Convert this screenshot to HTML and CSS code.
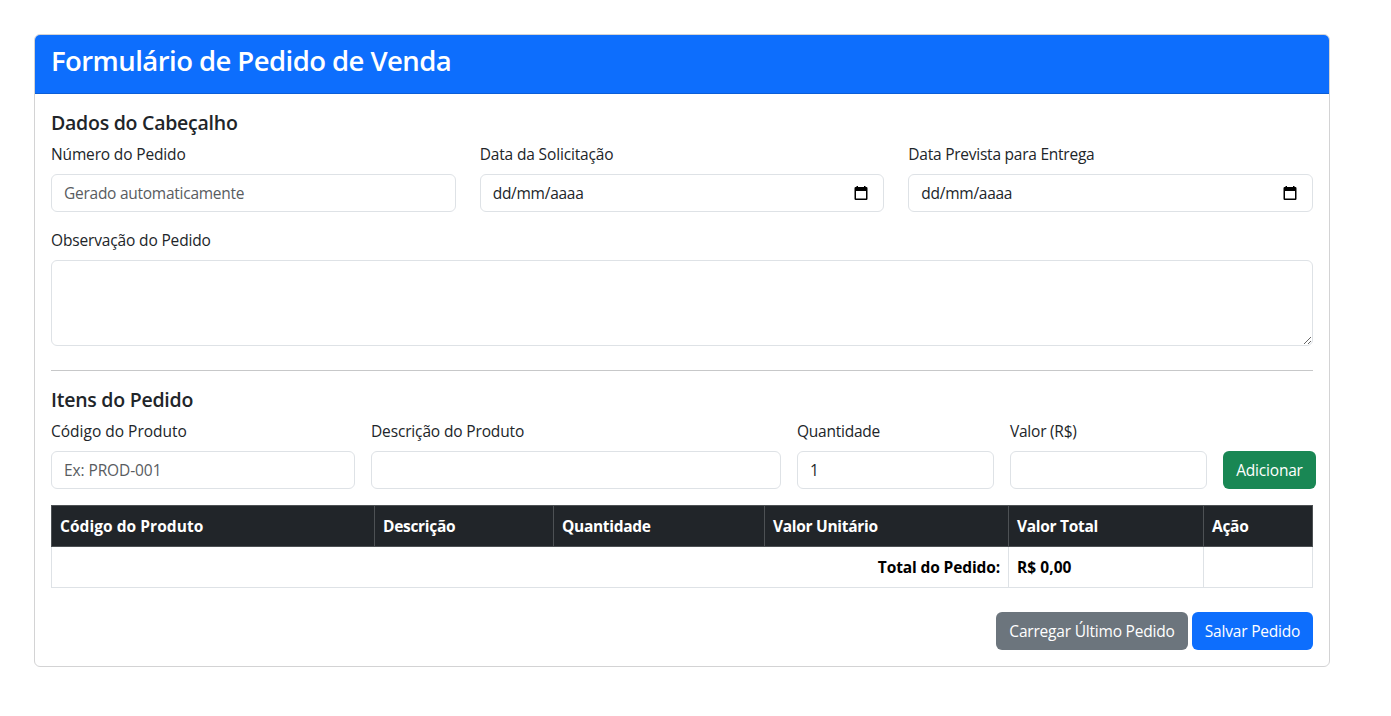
FILE: index.html
```html
<!DOCTYPE html>
<html lang="pt-BR">
<head>
<meta charset="utf-8">
<title>Formulário de Pedido de Venda</title>
<link rel="stylesheet" href="styles.css">
</head>
<body>
<main class="card">
  <header class="card-header"><h1 class="title">Formulário de Pedido de Venda</h1></header>
  <form class="card-body">
    <h2 class="section-title">Dados do Cabeçalho</h2>
    <div class="row-header">
      <div class="field">
        <label class="label" for="numero">Número do Pedido</label>
        <input class="control" id="numero" placeholder="Gerado automaticamente" readonly>
      </div>
      <div class="field">
        <span class="label">Data da Solicitação</span>
        <div class="control date"><span>dd/mm/aaaa</span>
          <svg class="calendar" viewBox="0 0 14 16"><path fill-rule="evenodd" d="M2.5 1h1.5v1h6V1h1.5v1H12.3Q13.5 2 13.5 3.200V13.800Q13.500 15 12.300 15H1.700Q.5 15 .5 13.800V3.200Q.5 2 1.700 2h.8zM2 6v7.500h10V6z"/></svg>
        </div>
      </div>
      <div class="field">
        <span class="label tight">Data Prevista para Entrega</span>
        <div class="control date"><span>dd/mm/aaaa</span>
          <svg class="calendar" viewBox="0 0 14 16"><path fill-rule="evenodd" d="M2.5 1h1.5v1h6V1h1.5v1H12.3Q13.5 2 13.5 3.200V13.800Q13.500 15 12.300 15H1.700Q.5 15 .5 13.800V3.200Q.5 2 1.700 2h.8zM2 6v7.500h10V6z"/></svg>
        </div>
      </div>
    </div>
    <div class="field notes">
      <label class="label" for="obs">Observação do Pedido</label>
      <textarea class="control area" id="obs"></textarea>
    </div>
    <hr class="rule">
    <h2 class="section-title">Itens do Pedido</h2>
    <div class="row-item">
      <div class="field">
        <label class="label wide" for="codigo">Código do Produto</label>
        <input class="control code" id="codigo" placeholder="Ex: PROD-001">
      </div>
      <div class="field">
        <label class="label" for="descricao">Descrição do Produto</label>
        <input class="control" id="descricao">
      </div>
      <div class="field">
        <label class="label tight" for="qtd">Quantidade</label>
        <input class="control" id="qtd" value="1">
      </div>
      <div class="field">
        <label class="label tight" for="valor">Valor (R$)</label>
        <input class="control" id="valor">
      </div>
      <button class="btn success" type="button">Adicionar</button>
    </div>
    <table class="items">
      <colgroup><col class="c1"><col class="c2"><col class="c3"><col class="c4"><col class="c5"><col class="c6"></colgroup>
      <thead><tr><th class="wide">Código do Produto</th><th>Descrição</th><th>Quantidade</th><th>Valor Unitário</th><th>Valor Total</th><th>Ação</th></tr></thead>
      <tfoot><tr><td class="total-label" colspan="4">Total do Pedido:</td><td class="wide">R$ 0,00</td><td></td></tr></tfoot>
    </table>
    <div class="actions">
      <button class="btn secondary" type="button">Carregar Último Pedido</button>
      <button class="btn primary" type="button">Salvar Pedido</button>
    </div>
  </form>
</main>
</body>
</html>
```
FILE: styles.css
```css
* { box-sizing: border-box; }
body {
  margin: 0;
  background: #fff;
  color: #212529;
  font-family: "Segoe UI", "Open Sans", "Noto Sans", sans-serif;
  font-size: 15.5px;
  line-height: 24px;
}
.card {
  width: 1296px;
  height: 633px;
  margin: 34px 0 0 34px;
  border: 1px solid #d3d3d4;
  border-radius: 6px;
}
.card-header {
  height: 59px;
  padding: 9px 16px;
  background: #0d6efd;
  border-bottom: 1px solid #0b5ed7;
  border-radius: 5px 5px 0 0;
}
.title {
  margin: 0;
  color: #fff;
  font-size: 27.5px;
  font-weight: 600;
  letter-spacing: -0.56px;
  line-height: 34px;
}
.card-body { padding: 17px 16px 16px; }
.section-title {
  margin: 0 0 7px;
  font-size: 19.5px;
  font-weight: 600;
  letter-spacing: -0.25px;
  line-height: 24px;
}
.label { letter-spacing: -0.15px; }
.label.tight { letter-spacing: -0.24px; }
.label.wide { letter-spacing: 0; }
.row-header {
  display: grid;
  grid-template-columns: repeat(3, 1fr);
  gap: 24px;
}
.row-item {
  display: grid;
  grid-template-columns: 304px 410px 197px 197px 93px;
  gap: 16px;
  align-items: end;
}
.field { display: flex; flex-direction: column; gap: 8px; }
.notes { margin-top: 16px; }
.control {
  width: 100%;
  height: 38px;
  padding: 6px 12px;
  border: 1px solid #dee2e6;
  border-radius: 6px;
  background: #fff;
  color: #212529;
  font: inherit;
  letter-spacing: -0.26px;
  outline: 0;
}
.control.code { letter-spacing: -0.1px; }
.control::placeholder { color: #595c5f; opacity: 1; }
.date { display: flex; align-items: center; justify-content: space-between; }
.calendar { width: 14px; height: 16px; margin: 0 3px 1px 0; fill: #000; }
.area { display: block; height: 86px; resize: vertical; }
.rule { margin: 24px 0 17px; border: 0; border-top: 1px solid #c7c8c9; }
.btn {
  height: 38px;
  padding: 0;
  border: 0;
  border-radius: 6px;
  color: #fff;
  font: inherit;
  letter-spacing: -0.2px;
  white-space: nowrap;
}
.success { background: #198754; }
.secondary { width: 192px; background: #6c757d; }
.primary { width: 121px; background: #0d6efd; }
.items {
  width: 1262px;
  margin-top: 16px;
  table-layout: fixed;
  border-collapse: collapse;
  font-weight: 700;
  letter-spacing: -0.3px;
}
.c1 { width: 323px; }
.c2 { width: 179px; }
.c3 { width: 211px; }
.c4 { width: 244px; }
.c5 { width: 195px; }
.c6 { width: 109px; }
.items th, .items td { height: 41px; padding: 8px; text-align: left; }
.items th { background: #212529; color: #fff; border: 1px solid #4d5154; }
.items td { color: #000; border: 1px solid #dee2e6; }
.items .total-label { text-align: right; letter-spacing: -0.12px; }
.items .wide { letter-spacing: 0.05px; }
.actions { display: flex; justify-content: flex-end; gap: 4px; margin-top: 24px; }
```
